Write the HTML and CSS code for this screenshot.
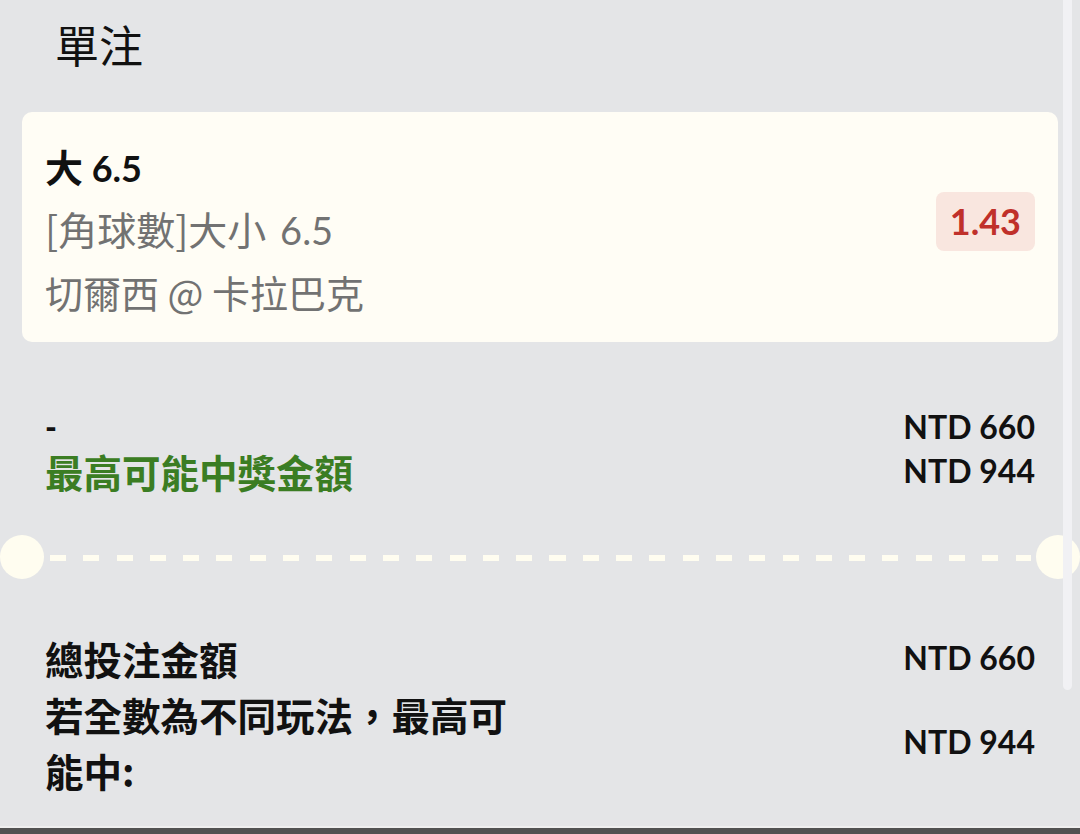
FILE: index.html
```html
<!DOCTYPE html>
<html lang="zh-Hant">
<head>
<meta charset="utf-8">
<title>單注</title>
<link rel="stylesheet" href="styles.css">
</head>
<body>
<div class="screen">
  <main class="sheet">
    <h1 class="title">單注</h1>
    <section class="bet-card">
      <div class="bet-info">
        <div class="bet-pick">大 <span class="lat">6.5</span></div>
        <div class="bet-market">[角球數]大小 <span class="lat lat-light">6.5</span></div>
        <div class="bet-match">切爾西 @ 卡拉巴克</div>
      </div>
      <div class="odds">1.43</div>
    </section>
    <section class="stake">
      <div class="row"><span class="dash-label">-</span><span class="amount">NTD 660</span></div>
      <div class="row"><span class="win-label">最高可能中獎金額</span><span class="amount">NTD 944</span></div>
    </section>
    <div class="divider"><span class="notch"></span><span class="dashes"></span><span class="notch"></span></div>
    <section class="summary">
      <div class="sum-row"><span class="sum-label">總投注金額</span><span class="amount">NTD 660</span></div>
      <div class="sum-row"><span class="sum-label">若全數為不同玩法，最高可能中:</span><span class="amount">NTD 944</span></div>
    </section>
  </main>
  <div class="scroll-thumb"></div>
  <footer class="bottom-bar"></footer>
</div>
</body>
</html>
```
FILE: styles.css
```css
html, body {
  margin: 0;
  height: 100%;
}
body {
  background: #e4e5e7;
  font-family: "Noto Sans CJK TC", "Noto Sans", sans-serif;
  color: #111;
  overflow: hidden;
}
.screen {
  position: relative;
  height: 834px;
  display: flex;
  flex-direction: column;
}
.sheet {
  flex: 1;
  padding: 0 22px;
  overflow: hidden;
}
.title {
  margin: 0 0 24px;
  height: 88px;
  display: flex;
  align-items: center;
  padding-left: 33px;
  font-size: 44px;
  font-weight: 400;
  line-height: 1;
  color: #111;
}
.bet-card {
  box-sizing: border-box;
  height: 230px;
  background: #fffdf5;
  border-radius: 10px;
  display: flex;
  align-items: flex-start;
  justify-content: space-between;
  padding: 22px 23px 19px;
}
.bet-info {
  font-size: 38px;
  line-height: 63px;
}
.bet-pick {
  font-weight: 700;
  color: #111;
}
.bet-market, .bet-match {
  color: #727272;
  font-weight: 400;
}
.bet-market {
  font-size: 39px;
}
.lat {
  font-family: Lato, "Liberation Sans", sans-serif;
  font-size: 36px;
  line-height: 1;
}
.lat-light {
  font-weight: 400;
  font-size: 38px;
  margin-left: 5px;
}
.odds {
  margin-top: 58px;
  height: 59px;
  line-height: 59px;
  padding: 0 14px;
  border-radius: 8px;
  background: #f9e6df;
  color: #c0302a;
  font-family: Lato, "Liberation Sans", sans-serif;
  font-weight: 700;
  font-size: 36px;
}
.stake {
  margin-top: 63px;
  padding: 0 23px;
}
.row, .sum-row {
  display: flex;
  justify-content: space-between;
  align-items: center;
}
.row {
  height: 44px;
}
.row > span {
  line-height: 40px;
}
.dash-label {
  font-family: Lato, "Liberation Sans", sans-serif;
  font-weight: 900;
  font-size: 32px;
}
.win-label {
  color: #3b7d23;
  font-weight: 700;
  font-size: 38.5px;
}
.amount {
  font-family: Lato, "Liberation Sans", sans-serif;
  font-weight: 700;
  font-size: 32px;
  color: #111;
}
.divider {
  display: flex;
  align-items: center;
  height: 44px;
  margin: 42px -22px 0;
}
.notch {
  flex: none;
  width: 44px;
  height: 44px;
  border-radius: 50%;
  background: #fffdf0;
}
.dashes {
  flex: 1;
  height: 6px;
  margin: 2px 5px 0 6px;
  background: repeating-linear-gradient(90deg, #fffdf0 0 16px, transparent 16px 33.3px);
}
.summary {
  margin-top: 51px;
  padding: 0 23px;
}
.sum-row {
  line-height: 56px;
}
.sum-label {
  max-width: 480px;
  font-weight: 700;
  font-size: 38.5px;
  color: #111;
}
.scroll-thumb {
  position: absolute;
  top: 0;
  right: 8px;
  width: 9px;
  height: 690px;
  border-radius: 0 0 5px 5px;
  background: #f1f1f4;
}
.bottom-bar {
  flex: none;
  height: 6px;
  border-top: 2px solid #efefef;
  background: #525252;
}
```
